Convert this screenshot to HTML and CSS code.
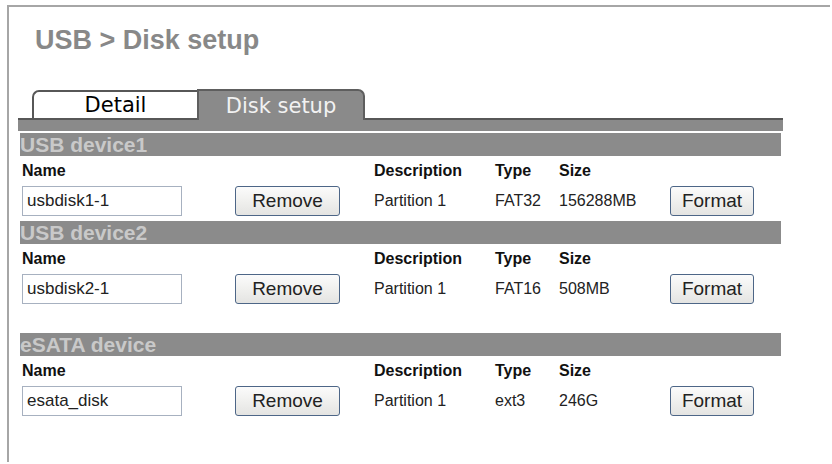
FILE: index.html
```html
<!DOCTYPE html>
<html>
<head>
<meta charset="utf-8">
<title>USB &gt; Disk setup</title>
<link rel="stylesheet" href="styles.css">
</head>
<body>
<div class="frame">
  <h1 class="title">USB &gt; Disk setup</h1>
  <div class="tabs">
    <div class="tab tab-detail">Detail</div>
    <div class="tab tab-active">Disk setup</div>
  </div>
  <div class="tabbar"></div>

  <div class="section">
    <div class="bar">USB device1</div>
    <div class="grid">
      <div class="lbl">Name</div><div></div><div class="lbl">Description</div><div class="lbl">Type</div><div class="lbl">Size</div><div></div>
      <div><input class="name" type="text" value="usbdisk1-1"></div>
      <div><button class="btn btn-remove">Remove</button></div>
      <div class="val">Partition 1</div>
      <div class="val">FAT32</div>
      <div class="val">156288MB</div>
      <div><button class="btn btn-format">Format</button></div>
    </div>
  </div>

  <div class="section">
    <div class="bar">USB device2</div>
    <div class="grid">
      <div class="lbl">Name</div><div></div><div class="lbl">Description</div><div class="lbl">Type</div><div class="lbl">Size</div><div></div>
      <div><input class="name" type="text" value="usbdisk2-1"></div>
      <div><button class="btn btn-remove">Remove</button></div>
      <div class="val">Partition 1</div>
      <div class="val">FAT16</div>
      <div class="val">508MB</div>
      <div><button class="btn btn-format">Format</button></div>
    </div>
  </div>

  <div class="section section-gap">
    <div class="bar">eSATA device</div>
    <div class="grid">
      <div class="lbl">Name</div><div></div><div class="lbl">Description</div><div class="lbl">Type</div><div class="lbl">Size</div><div></div>
      <div><input class="name" type="text" value="esata_disk"></div>
      <div><button class="btn btn-remove">Remove</button></div>
      <div class="val">Partition 1</div>
      <div class="val">ext3</div>
      <div class="val">246G</div>
      <div><button class="btn btn-format">Format</button></div>
    </div>
  </div>
</div>
</body>
</html>
```
FILE: styles.css
```css
html, body {
  margin: 0;
  padding: 0;
  background: #ffffff;
  overflow: hidden;
}
body {
  font-family: "Liberation Sans", Arial, sans-serif;
  color: #222222;
}
.frame {
  margin: 5px 0 0 7px;
  width: 823px;
  height: 457px;
  border-top: 2px solid #a6a6a6;
  border-left: 2px solid #a6a6a6;
  box-sizing: border-box;
}
.title {
  margin: 17px 0 0 26px;
  font-size: 27px;
  line-height: 32px;
  font-weight: bold;
  color: #888888;
}
.tabs {
  display: flex;
  align-items: flex-end;
  margin: 33px 0 0 9px;
  width: 751px;
  height: 29px;
  padding-left: 14px;
  border-bottom: 2px solid #575757;
}
.tab {
  box-sizing: border-box;
  font-family: "DejaVu Sans", Verdana, sans-serif;
  font-size: 21px;
  text-align: center;
}
.tab-detail {
  width: 165px;
  height: 28px;
  line-height: 26px;
  background: #ffffff;
  color: #000000;
  border: 2px solid #575757;
  border-bottom: none;
  border-right: none;
  border-top-left-radius: 7px;
}
.tab-active {
  width: 168px;
  height: 31px;
  margin-bottom: -2px;
  line-height: 30px;
  background: #8a8a8a;
  color: #f2f2f2;
  border: 2px solid #5e5e5e;
  border-bottom: none;
  border-top-right-radius: 7px;
}
.tabbar {
  margin: 0 0 0 9px;
  width: 765px;
  height: 11px;
  background: #8a8a8a;
}
.section {
  margin: 2px 0 0 11px;
  width: 761px;
}
.section + .section {
  margin-top: 5px;
}
.section.section-gap {
  margin-top: 29px;
}
.bar {
  height: 23px;
  line-height: 23px;
  background: #8b8b8b;
  color: #c9c9c9;
  font-size: 21px;
  font-weight: bold;
  white-space: nowrap;
  overflow: hidden;
}
.grid {
  display: grid;
  grid-template-columns: 213px 139px 121px 64px 111px 1fr;
  grid-template-rows: 30px 30px;
  padding-left: 2px;
  align-items: center;
}
.lbl {
  font-size: 16px;
  font-weight: bold;
  color: #111111;
}
.val {
  font-size: 16px;
  color: #222222;
}
.name {
  display: block;
  box-sizing: border-box;
  width: 160px;
  height: 30px;
  margin: 0;
  padding: 0 4px;
  border: 1px solid #a7b1c0;
  background: #ffffff;
  font-family: "Liberation Sans", Arial, sans-serif;
  font-size: 17px;
  color: #222222;
  outline: none;
}
.btn {
  display: block;
  box-sizing: border-box;
  height: 30px;
  margin: 0;
  padding: 0;
  border: 1px solid #4d6687;
  border-radius: 3px;
  background: linear-gradient(#fbfbfb, #f0f0ee 50%, #e4e4e2);
  font-family: "Liberation Sans", Arial, sans-serif;
  font-size: 19px;
  color: #222222;
}
.btn-remove {
  width: 105px;
}
.btn-format {
  width: 84px;
}
```
